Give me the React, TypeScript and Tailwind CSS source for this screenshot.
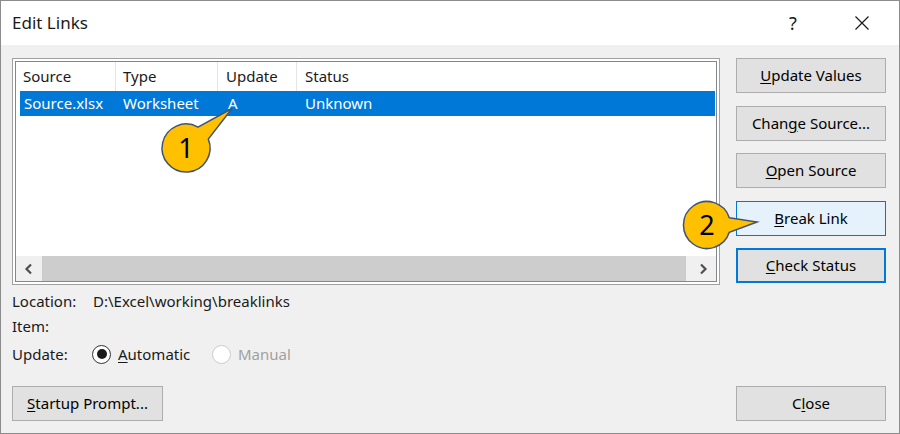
import React from 'react';

const font = "font-['Noto_Sans','Liberation_Sans',sans-serif]";

interface BtnProps {
  label: React.ReactNode;
  variant?: 'normal' | 'hover' | 'default';
}

const DlgButton: React.FC<BtnProps> = ({ label, variant = 'normal' }) => {
  let cls = 'border border-[#adadad] bg-[#e1e1e1]';
  if (variant === 'hover') cls = 'border border-[#0078d7] bg-[#e5f1fb]';
  if (variant === 'default') cls = 'border-2 border-[#0078d7] bg-[#e1e1e1]';
  return (
    <div className={`h-[35px] w-[150px] flex items-center justify-center text-[15px] text-black ${cls}`}>
      {label}
    </div>
  );
};

// access key letter
const K: React.FC<{ children: React.ReactNode }> = ({ children }) => (
  <span className="underline underline-offset-[2px] decoration-1">{children}</span>
);

const Chevron: React.FC<{ dir: 'left' | 'right' }> = ({ dir }) => (
  <svg width="10" height="12" viewBox="0 0 10 12">
    <polyline
      points={dir === 'left' ? '7,1.5 2.5,6 7,10.5' : '3,1.5 7.5,6 3,10.5'}
      fill="none"
      stroke="#505050"
      strokeWidth="2.2"
    />
  </svg>
);

export default function App() {
  return (
    <div className={`relative w-[900px] h-[434px] ${font}`}>
      <div className="w-[900px] h-[434px] border border-[#8c8c8c] bg-[#f0f0f0] flex flex-col">
        {/* Title bar */}
        <div className="h-[44px] bg-white flex items-center justify-between pl-[11px] pr-[30px]">
          <span className="text-[17px] text-[#1a1a1a]">Edit Links</span>
          <div className="flex items-center">
            <span className="w-[20px] text-center text-[18px] text-[#1a1a1a]">?</span>
            <svg className="ml-[52px]" width="14" height="14" viewBox="0 0 14 14">
              <path d="M0.5 0.5 L13.5 13.5 M13.5 0.5 L0.5 13.5" stroke="#1a1a1a" strokeWidth="1.2" />
            </svg>
          </div>
        </div>

        {/* Body */}
        <div className="flex-1 flex pl-[11px] pt-[13px] pb-[12px]">
          {/* Left column */}
          <div className="w-[708px] flex flex-col">
            {/* Links list */}
            <div className="h-[227px] border border-[#a0a0a0] bg-white p-[2px]">
              <div className="h-full border border-[#828790] bg-white flex flex-col text-[15px] text-[#1a1a1a]">
                <div className="h-[29px] flex">
                  <div className="w-[100px] pl-[7px] flex items-center border-r border-[#e5e5e5]">Source</div>
                  <div className="w-[102px] pl-[7px] flex items-center border-r border-[#e5e5e5]">Type</div>
                  <div className="w-[79px] pl-[8px] flex items-center border-r border-[#e5e5e5]">Update</div>
                  <div className="flex-1 pl-[8px] flex items-center">Status</div>
                </div>
                <div className="h-[25px] ml-[4px] mr-[1px] bg-[#0078d7] text-white flex">
                  <div className="w-[96px] pl-[4px] flex items-center">Source.xlsx</div>
                  <div className="w-[102px] pl-[7px] flex items-center">Worksheet</div>
                  <div className="w-[79px] pl-[10px] flex items-center">A</div>
                  <div className="flex-1 pl-[8px] flex items-center">Unknown</div>
                </div>
                {/* Horizontal scroll bar */}
                <div className="mt-auto h-[25px] bg-[#f0f0f0] flex">
                  <div className="w-[26px] flex items-center justify-center">
                    <Chevron dir="left" />
                  </div>
                  <div className="flex-1 bg-[#cdcdcd] mr-[4px]" />
                  <div className="w-[26px] flex items-center justify-center">
                    <Chevron dir="right" />
                  </div>
                </div>
              </div>
            </div>

            {/* Details */}
            <div className="mt-[4px] text-[15px] text-[#1a1a1a]">
              <div className="h-[25px] flex items-center">
                <span className="w-[81px]">Location:</span>
                <span>D:\Excel\working\breaklinks</span>
              </div>
              <div className="h-[25px] flex items-center">
                <span className="w-[81px]">Item:</span>
              </div>
              <div className="h-[30px] flex items-center">
                <span className="w-[80px]">Update:</span>
                <div className="w-[120px] flex items-center">
                  <span className="w-[19px] h-[19px] rounded-full border-[1.5px] border-[#333333] bg-white flex items-center justify-center">
                    <span className="w-[10px] h-[10px] rounded-full bg-[#1a1a1a]" />
                  </span>
                  <span className="ml-[7px]">
                    <K>A</K>utomatic
                  </span>
                </div>
                <div className="flex items-center">
                  <span className="w-[19px] h-[19px] rounded-full border border-[#cccccc] bg-white" />
                  <span className="ml-[7px] text-[#a0a0a0]">Manual</span>
                </div>
              </div>
            </div>

            <div className="mt-auto w-[151px]">
              <div className="h-[35px] w-[151px] flex items-center justify-center text-[15px] text-black border border-[#adadad] bg-[#e1e1e1]">
                <span>
                  <K>S</K>tartup Prompt...
                </span>
              </div>
            </div>
          </div>

          {/* Right column */}
          <div className="ml-[16px] w-[150px] flex flex-col">
            <div className="flex flex-col gap-[12.5px]">
              <DlgButton label={<span><K>U</K>pdate Values</span>} />
              <DlgButton label={<span>Chan<K>g</K>e Source...</span>} />
              <DlgButton label={<span><K>O</K>pen Source</span>} />
              <DlgButton variant="hover" label={<span><K>B</K>reak Link</span>} />
              <DlgButton variant="default" label={<span><K>C</K>heck Status</span>} />
            </div>
            <div className="mt-auto">
              <DlgButton label={<span>C<K>l</K>ose</span>} />
            </div>
          </div>
        </div>
      </div>

      {/* Numbered callouts */}
      <svg className="absolute top-0 left-0 pointer-events-none" width="900" height="434" viewBox="0 0 900 434">
        <path
          d="M198 127.2 L232 108.5 L208.3 139 A24 24 0 1 1 198 127.2 Z"
          fill="#ffc000"
          stroke="#3e5378"
          strokeWidth="1.5"
        />
        <text x="186" y="158" textAnchor="middle" fontSize="27" fontFamily="Noto Sans, sans-serif" fill="#000">1</text>
        <path
          d="M729.3 217.7 L757 222 L729.3 232.3 A23.5 23.5 0 1 1 729.3 217.7 Z"
          fill="#ffc000"
          stroke="#3e5378"
          strokeWidth="1.5"
        />
        <text x="707" y="235" textAnchor="middle" fontSize="27" fontFamily="Noto Sans, sans-serif" fill="#000">2</text>
      </svg>
    </div>
  );
}
